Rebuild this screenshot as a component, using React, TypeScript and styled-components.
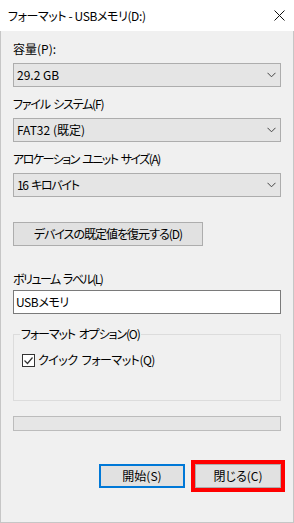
import React from 'react';
import styled, { createGlobalStyle } from 'styled-components';

const Global = createGlobalStyle`
  html, body { margin: 0; padding: 0; background: #ffffff; }
  body {
    font-family: "Noto Sans CJK JP", "Noto Sans", sans-serif;
    font-size: 12px;
    color: #000;
    font-feature-settings: "palt";
  }
  * { box-sizing: border-box; }
`;

const Window = styled.div`
  width: 294px;
  height: 523px;
  display: flex;
  flex-direction: column;
  background: #ffffff;
`;

const TitleBar = styled.div`
  height: 31px;
  flex: none;
  display: flex;
  align-items: center;
  justify-content: space-between;
  padding: 0 9px 0 8px;
  background: #ffffff;
  line-height: 16px;
`;

const TitleText = styled.span`
  font-size: 12px;
  letter-spacing: -0.4px;
`;

const Body = styled.div`
  flex: 1;
  display: flex;
  flex-direction: column;
  background: #f0f0f0;
  border: 1px solid #c6c6c6;
  border-top: none;
  padding: 10px 12px 0 12px;
`;

const Label = styled.div<{ $gap?: number; $top?: number; $ls?: number }>`
  height: 16px;
  line-height: 16px;
  margin-top: ${(p) => p.$top ?? 0}px;
  margin-bottom: ${(p) => p.$gap ?? 6}px;
  letter-spacing: ${(p) => p.$ls ?? 0}px;
  word-spacing: 2px;
  white-space: nowrap;
`;

const Combo = styled.div`
  height: 24px;
  border: 1px solid #adadad;
  background: #e5e5e5;
  display: flex;
  align-items: center;
  justify-content: space-between;
  padding: 0 4px 0 3px;
  margin-bottom: 9px;
  line-height: 16px;
`;

const ComboValue = styled.span<{ $ls?: number }>`
  letter-spacing: ${(p) => p.$ls ?? 0}px;
  word-spacing: ${(p) => (p.$ls ? 2 : 0)}px;
  white-space: pre;
`;

const Chevron = () => (
  <svg width="9" height="6" viewBox="0 0 9 6">
    <polyline points="0.5,0.8 4.5,4.8 8.5,0.8" fill="none" stroke="#444" strokeWidth="1" />
  </svg>
);

const CloseIcon = () => (
  <svg width="11" height="11" viewBox="0 0 11 11">
    <path d="M0.5 0.5 L10.5 10.5 M10.5 0.5 L0.5 10.5" stroke="#111" strokeWidth="1" fill="none" />
  </svg>
);

const Button = styled.button<{ $width: number; $variant?: 'default' | 'primary' | 'marked'; $ls?: number }>`
  width: ${(p) => p.$width}px;
  height: 24px;
  padding: 0;
  font: inherit;
  color: #000;
  line-height: 16px;
  letter-spacing: ${(p) => p.$ls ?? 0}px;
  background: #e1e1e1;
  border: ${(p) => (p.$variant === 'primary' ? '2px solid #0078d7' : '1px solid #adadad')};
  box-shadow: ${(p) => (p.$variant === 'marked' ? '0 0 0 4px #ff0000' : 'none')};
  border-radius: 0;
  display: flex;
  align-items: center;
  justify-content: center;
`;

const RestoreButton = styled(Button)`
  margin-top: 16px;
`;

const TextInput = styled.div`
  height: 24px;
  border: 1px solid #7a7a7a;
  background: #ffffff;
  display: flex;
  align-items: center;
  padding-left: 2px;
  line-height: 16px;
  letter-spacing: -0.4px;
`;

const Group = styled.fieldset`
  margin: 12px 0 0 0;
  padding: 10px 0 32px 8px;
  border: 1px solid #dcdcdc;
  min-inline-size: 0;
`;

const Legend = styled.legend`
  margin-left: -2px;
  padding: 0 1px;
  line-height: 16px;
  height: 16px;
  letter-spacing: -1.1px;
  word-spacing: 2px;
`;

const CheckRow = styled.label`
  display: flex;
  align-items: center;
  gap: 3px;
  height: 16px;
  line-height: 16px;
  letter-spacing: -0.5px;
  word-spacing: 2px;
`;

const CheckBox = styled.span`
  width: 13px;
  height: 13px;
  border: 1px solid #333;
  background: #fff;
  display: flex;
  align-items: center;
  justify-content: center;
`;

const Progress = styled.div`
  margin-top: 15px;
  height: 15px;
  border: 1px solid #bcbcbc;
  background: #e6e6e6;
`;

const ButtonRow = styled.div`
  margin-top: 33px;
  display: flex;
  justify-content: flex-end;
  gap: 10px;
`;

const ComboField = ({ label, value, labelLs, valueLs }: { label: string; value: string; labelLs?: number; valueLs?: number }) => (
  <>
    <Label $ls={labelLs}>{label}</Label>
    <Combo>
      <ComboValue $ls={valueLs}>{value}</ComboValue>
      <Chevron />
    </Combo>
  </>
);

export default function App() {
  return (
    <>
      <Global />
      <Window>
        <TitleBar>
          <TitleText>フォーマット - USBメモリ(D:)</TitleText>
          <CloseIcon />
        </TitleBar>
        <Body>
          <ComboField label="容量(P):" value="29.2 GB" />
          <ComboField label="ファイル システム(F)" value="FAT32 (既定)" labelLs={-1.2} />
          <ComboField label="アロケーション ユニット サイズ(A)" value="16 キロバイト" labelLs={-1.5} valueLs={-1.3} />
          <RestoreButton $width={190} $ls={-1}>デバイスの既定値を復元する(D)</RestoreButton>
          <Label $top={25} $gap={3} $ls={-1.5}>ボリューム ラベル(L)</Label>
          <TextInput>USBメモリ</TextInput>
          <Group>
            <Legend>フォーマット オプション(O)</Legend>
            <CheckRow>
              <CheckBox>
                <svg width="11" height="11" viewBox="0 0 11 11">
                  <polyline points="1.5,5.5 4.5,8.5 9.5,2.5" fill="none" stroke="#333" strokeWidth="1.2" />
                </svg>
              </CheckBox>
              クイック フォーマット(Q)
            </CheckRow>
          </Group>
          <Progress />
          <ButtonRow>
            <Button $width={86} $variant="primary">開始(S)</Button>
            <Button $width={86} $variant="marked">閉じる(C)</Button>
          </ButtonRow>
        </Body>
      </Window>
    </>
  );
}
